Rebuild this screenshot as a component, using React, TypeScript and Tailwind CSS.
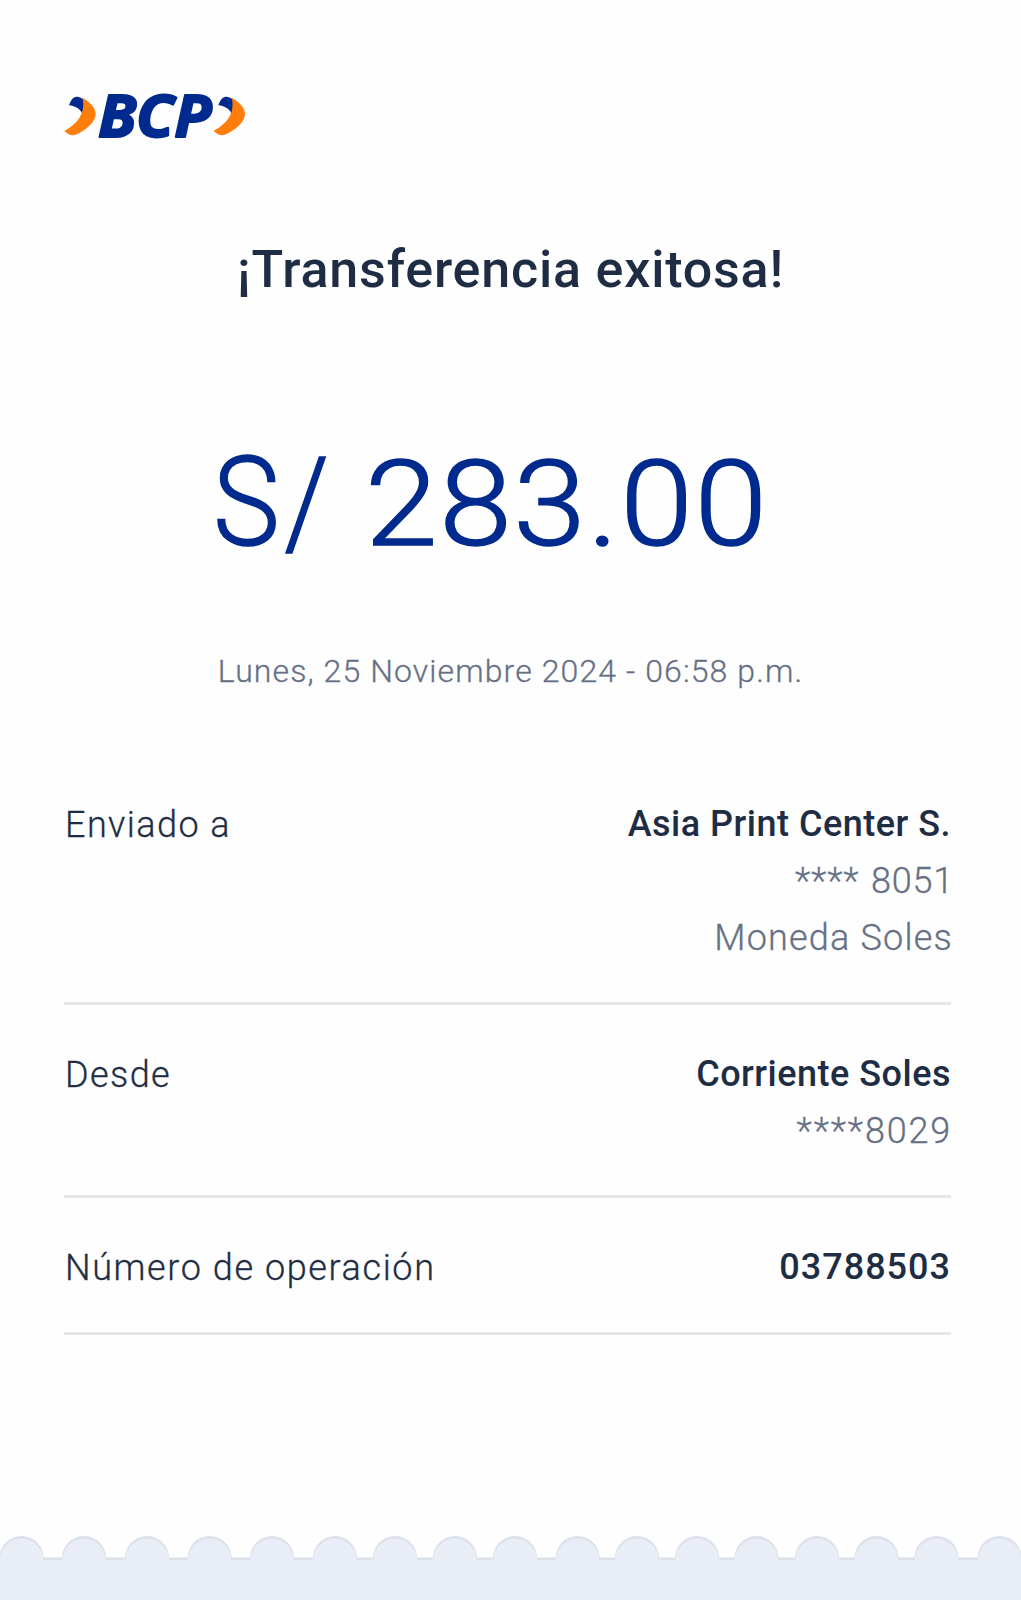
interface Line {
  text: string;
  className: string;
}

interface RowProps {
  label: string;
  labelClass: string;
  lines: Line[];
  className: string;
}

const scallops = [
  21.5, 84, 147, 209.5, 272, 335, 395, 455, 515, 577.5, 637, 697, 756.5, 817, 876.5, 936.5, 999.5,
];

function Chevron({ x }: { x: number }) {
  return (
    <g transform={`translate(${x} 0)`}>
      <path
        fill="#ff7d0a"
        d="M97 53 C122 67 137 84 137 102 C137 126 108 152 74 165 C62 167 50 161 43 152 C62 142 82 126 90 110 C93 104 95 100 95 95 Z"
      />
      <path fill="#002a8d" d="M57 76 C61 65 67 53 76 51 C84 49 94 53 98 57 C101 70 100 85 96 98 C88 86 74 77 57 76 Z" />
    </g>
  );
}

function Logo() {
  return (
    <svg viewBox="0 -60 630 330" className="block h-[110px] w-[210px]">
      <Chevron x={0} />
      <Chevron x={448} />
      <g
        fill="#002a8d"
        stroke="#002a8d"
        strokeWidth="6"
        strokeLinejoin="round"
        fontFamily="Open Sans, Noto Sans, sans-serif"
        fontWeight="700"
        fontStyle="italic"
        fontSize="176"
      >
        <text x="144" y="171" textLength="116" lengthAdjust="spacingAndGlyphs">
          B
        </text>
        <text x="258" y="171" textLength="114" lengthAdjust="spacingAndGlyphs">
          C
        </text>
        <text x="373" y="171" textLength="112" lengthAdjust="spacingAndGlyphs">
          P
        </text>
      </g>
    </svg>
  );
}

function Row({ label, labelClass, lines, className }: RowProps) {
  return (
    <div className={`flex justify-between border-b-[3px] border-[#e6e6e6] text-[36px] leading-[57px] ${className}`}>
      <span className={`pt-px pl-px font-light text-[#1f2d44] [-webkit-text-stroke:0.3px] ${labelClass}`}>{label}</span>
      <div className="flex flex-col items-end">
        {lines.map((line) => (
          <span key={line.text} className={line.className}>
            {line.text}
          </span>
        ))}
      </div>
    </div>
  );
}

function Edge() {
  return (
    <svg viewBox="0 0 1021 68" className="block h-[68px] w-full">
      <rect y="25.5" width="1021" height="43" fill="#dbe0ea" />
      {scallops.map((cx) => (
        <circle key={cx} cx={cx} cy="26" r="22" fill="#dbe0ea" />
      ))}
      <rect y="28" width="1021" height="40" fill="#e9edf5" />
      {scallops.map((cx) => (
        <circle key={cx} cx={cx} cy="28.3" r="21.8" fill="#e9edf5" />
      ))}
    </svg>
  );
}

export default function App() {
  return (
    <div className="flex h-[1600px] w-[1021px] flex-col overflow-hidden bg-[#fefefe] font-['Roboto','Liberation_Sans',sans-serif] whitespace-pre">
      <header className="pt-[60px] pl-[50px]">
        <Logo />
      </header>

      <main className="flex flex-1 flex-col">
        <h1 className="mt-[68px] text-center text-[52px] leading-[64px] font-medium tracking-[0.8px] text-[#1f2d44]">
          ¡Transferencia exitosa!
        </h1>
        <p className="mt-[131px] flex h-[140px] items-baseline pl-[213px] leading-[140px] font-light text-[#002a8d] [-webkit-text-stroke:1.5px]">
          <span className="w-[152px] origin-left scale-x-90 text-[125px] tracking-[5px]">S/</span>
          <span className="origin-left scale-x-110 text-[119px] tracking-[1.4px]">283.00</span>
        </p>
        <p className="mt-[76px] text-center text-[32px] leading-[44px] font-light tracking-[1.1px] text-[#667085] [-webkit-text-stroke:0.3px]">
          Lunes, 25 Noviembre 2024 - 06:58 p.m.
        </p>

        <section className="mt-[103px] pr-[70px] pl-16">
          <Row
            label="Enviado a"
            labelClass="tracking-[1.4px]"
            className="h-[209px]"
            lines={[
              { text: "Asia Print Center S.", className: "font-medium text-[#1f2d44] tracking-[0.5px]" },
              {
                text: "**** 8051",
                className:
                  "-mr-[3px] font-light text-[#667085] tracking-[0.8px] [word-spacing:2px] [-webkit-text-stroke:0.3px]",
              },
              {
                text: "Moneda Soles",
                className: "-mr-[2px] font-light text-[#667085] tracking-[1.2px] [-webkit-text-stroke:0.3px]",
              },
            ]}
          />
          <Row
            label="Desde"
            labelClass="tracking-[1.4px]"
            className="h-[193px] pt-[41px]"
            lines={[
              { text: "Corriente Soles", className: "font-medium text-[#1f2d44] tracking-[0.5px]" },
              {
                text: "****8029",
                className: "-mr-px font-light text-[#667085] tracking-[1.8px] [-webkit-text-stroke:0.3px]",
              },
            ]}
          />
          <Row
            label="Número de operación"
            labelClass="tracking-[1.6px]"
            className="h-[137px] pt-[41px]"
            lines={[{ text: "03788503", className: "font-medium text-[#1f2d44] tracking-[1px]" }]}
          />
        </section>
      </main>

      <footer>
        <Edge />
      </footer>
    </div>
  );
}
